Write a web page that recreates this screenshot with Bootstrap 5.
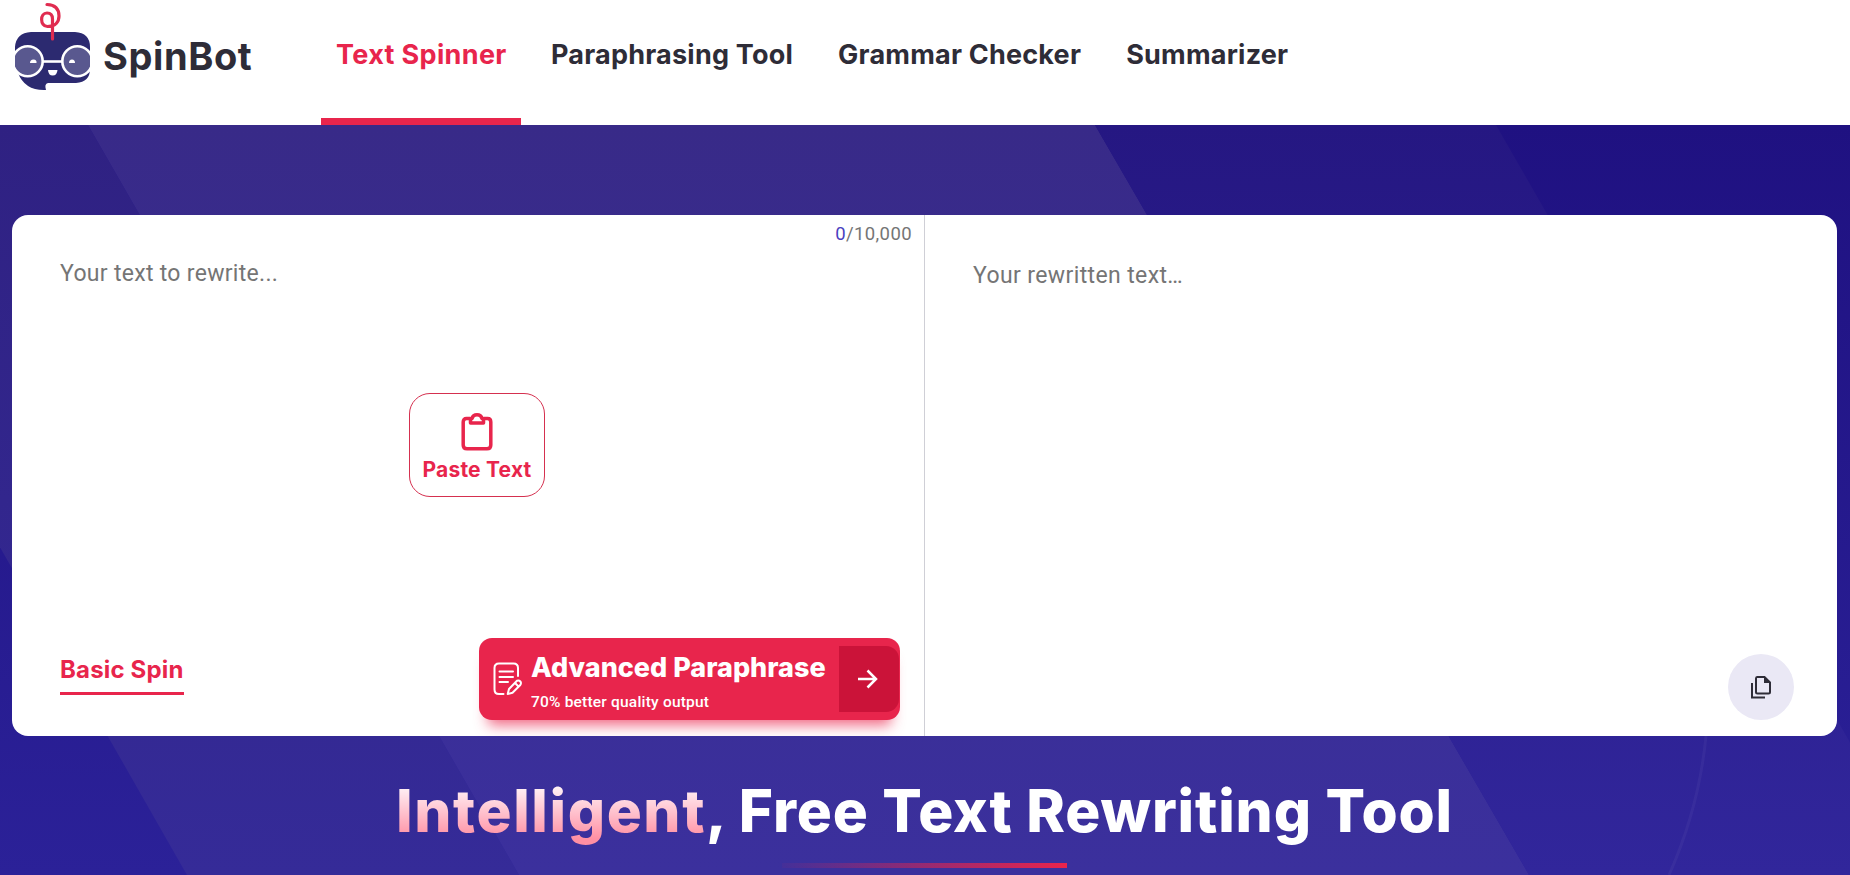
<!DOCTYPE html>
<html lang="en">
<head>
<meta charset="utf-8">
<meta name="viewport" content="width=device-width, initial-scale=1">
<title>SpinBot</title>
<link href="https://cdn.jsdelivr.net/npm/bootstrap@5.3.0/dist/css/bootstrap.min.css" rel="stylesheet">
<style>
  :root { --brand: #e8254c; --ink: #2e2c37; }
  body { font-family: Inter, Roboto, sans-serif; color: var(--ink); height: 875px; overflow: hidden; }
  .site-header { height: 125px; padding-left: 12px; }
  .brand-name { font-size: 38px; font-weight: 700; line-height: 46px; letter-spacing: .6px; margin: 33px 0 0 9px; width: 220px; color: var(--ink); }
  .main-nav { gap: 15px; margin-left: -2px; }
  .main-nav .nav-link { font-size: 27px; font-weight: 700; line-height: 110px; height: 125px; padding: 0 15px; color: var(--ink); letter-spacing: .22px; white-space: nowrap; border-bottom: 7px solid transparent; }
  .main-nav .nav-link.active { color: var(--brand); border-color: var(--brand); letter-spacing: .35px; width: 200px; }
  .hero { height: 750px; padding: 90px 13px 0 12px; background: #221483; }
  .hero-art { left: 0; top: 0; }
  .editor { height: 521px; border-radius: 16px; overflow: hidden; }
  .pane { height: 521px; }
  .pane-in { width: 913px; border-right: 1px solid #cfcfd6; padding: 0 24px 0 48px; }
  .counter { font: 400 18.500px/24px Roboto, sans-serif; letter-spacing: .4px; color: #757575; height: 24px; margin: 7px -12px 0 0; }
  .counter b { font-weight: 400; color: #4a3fc0; }
  .hint { font: 400 23px/30px Roboto, sans-serif; color: #757575; letter-spacing: .3px; }
  .hint-in { margin-top: 13px; }
  .hint-out { margin-top: 46px; letter-spacing: .38px; }
  .paste { width: 136px; height: 104px; border: 1px solid #d5304f; border-radius: 21px; color: var(--brand); font-size: 21px; font-weight: 700; line-height: 26px; letter-spacing: .22px; margin: 104px 0 0 349px; padding: 19px 0 0; background: #fff; white-space: nowrap; }
  .paste span { margin-top: 6px; }
  .basic { color: var(--brand); font-size: 24px; font-weight: 700; line-height: 32px; height: 41px; width: 124px; border-bottom: 3px solid var(--brand); text-decoration: none; white-space: nowrap; margin-top: 16px; letter-spacing: .17px; }
  .advanced { width: 421px; height: 82px; border-radius: 13px; background: var(--brand); color: #fff; padding: 0 1px 0 14px; box-shadow: 0 14px 14px -9px rgba(234,36,75,.7); }
  .advanced .labels { width: 308px; }
  .advanced strong { font-size: 27px; font-weight: 800; line-height: 30px; margin-top: 15px; display: block; white-space: nowrap; }
  .advanced em { font: 500 15.5px/24px Roboto, sans-serif; letter-spacing: .2px; margin-top: 7px; display: block; }
  .go { width: 60px; height: 66px; background: #cb1339; border-radius: 0 13px 13px 0; margin-top: 8px; }
  .copy { width: 66px; height: 66px; background: #eae8f5; right: 43px; bottom: 16px; }
  .headline { font-size: 58.5px; font-weight: 800; line-height: 72px; letter-spacing: .86px; color: #fff; margin-top: 39px; white-space: nowrap; }
  .headline span { letter-spacing: 1.6px; background: linear-gradient(#fff 8%, #ffeaf0 22%, #ff8fa3 90%); -webkit-background-clip: text; background-clip: text; color: transparent; }
  .rule { width: 285px; height: 5px; margin: 16px auto 0; background: linear-gradient(90deg, rgba(234,36,75,.05), #ea244b); }
</style>
</head>
<body>
<header class="site-header bg-white d-flex">
  <a href="#" class="d-flex text-decoration-none">
    <svg width="82" height="95" viewBox="12 0 82 95" fill="none">
      <defs><clipPath id="face"><rect x="15" y="32" width="75" height="59"/></clipPath></defs>
      <path d="M31 32H75Q90 33 90 47V69Q90 82 76 83H48Q44 84 46 90Q25 91 18 73L15 66V47Q16 33 31 32Z" fill="#2c2a70"/>
      <g clip-path="url(#face)" stroke="#fff" stroke-width="2.600">
        <circle cx="27.700" cy="61.300" r="15" fill="#59588f"/>
        <circle cx="77.300" cy="61.300" r="15" fill="#59588f"/>
        <path d="M43 61.500H62"/>
      </g>
      <path d="M30 63Q30 59.500 33.500 59.500T36.500 63ZM69 63Q69 59.500 72 59.500T75 63ZM48 70H57.500Q57 75.500 52.700 75.500T48 70Z" fill="#fff"/>
      <path d="M52.500 39V19Q52.500 13 47 13C40 13 39.500 26 47.500 26.500C56 26.500 59 21 59 16Q59 5 47 4.500" stroke="#e02c50" stroke-width="3.200" stroke-linecap="round"/>
    </svg>
    <span class="brand-name">SpinBot</span>
  </a>
  <nav class="nav main-nav flex-nowrap">
    <a class="nav-link active" href="#">Text Spinner</a>
    <a class="nav-link" href="#">Paraphrasing Tool</a>
    <a class="nav-link" href="#">Grammar Checker</a>
    <a class="nav-link" href="#">Summarizer</a>
  </nav>
</header>
<main class="hero position-relative">
  <svg class="hero-art position-absolute" width="1850" height="750" viewBox="0 125 1850 750">
    <defs>
      <linearGradient id="base" x1="0" y1="0" x2="0" y2="1"><stop offset="0" stop-color="#1f1181"/><stop offset="1" stop-color="#2b2198"/></linearGradient>
      <linearGradient id="left" x1="0" y1="0" x2="0" y2="1"><stop offset="0" stop-color="#2f2182"/><stop offset="1" stop-color="#352b98"/></linearGradient>
      <linearGradient id="mid" x1="0" y1="0" x2="0" y2="1"><stop offset="0" stop-color="#382a88"/><stop offset="1" stop-color="#3b309d"/></linearGradient>
      <linearGradient id="right" x1="0" y1="0" x2="0" y2="1"><stop offset="0" stop-color="#251782"/><stop offset="1" stop-color="#31269b"/></linearGradient>
    </defs>
    <rect y="125" width="1850" height="750" fill="url(#base)"/>
    <path d="M-241 125H88L519 875H187Z" fill="url(#left)"/>
    <path d="M88 125H1095L1529 875H519Z" fill="url(#mid)"/>
    <path d="M1095 125H1496L1926 875H1529Z" fill="url(#right)"/>
    <path d="M1706 736Q1699 808 1669 875" fill="none" stroke="#fff" stroke-opacity=".04" stroke-width="3"/>
  </svg>
  <section class="editor position-relative bg-white d-flex">
    <div class="pane pane-in d-flex flex-column">
      <div class="counter text-end"><b>0</b>/10,000</div>
      <div class="hint hint-in">Your text to rewrite...</div>
      <button class="paste d-flex flex-column align-items-center" type="button">
        <svg width="32" height="38" viewBox="0 0 32 38" fill="none" stroke="currentColor" stroke-width="3.500" stroke-linejoin="round"><path d="M9 5.500H5.500Q2.200 5.500 2.200 9V32Q2.200 35.800 6 35.800H26Q29.800 35.800 29.800 32V9Q29.800 5.500 26.500 5.500H23M9.500 5.500H11Q12 1.800 16 1.800T21 5.500H22.500V10H9.500Z"/></svg>
        <span>Paste Text</span>
      </button>
      <div class="d-flex justify-content-between mt-auto pb-3">
        <a href="#" class="basic">Basic Spin</a>
        <a href="#" class="advanced d-flex text-decoration-none">
          <svg width="29" height="34" viewBox="0 0 29 34" fill="none" stroke="#fff" stroke-width="2" stroke-linecap="round" stroke-linejoin="round" class="mt-4"><path d="M10.500 32H6Q1.500 32 1.500 27.500V6Q1.500 1.500 6 1.500H20.500Q25 1.500 25 6V14M6.500 9.500H20M6.500 15H20M6.500 20H15M16 27L24 18.800Q26 18 27.300 19.500T27.300 23L19.500 30.800L14.700 32ZM22 21L25 24"/></svg>
          <span class="labels ms-auto"><strong>Advanced Paraphrase</strong><em>70% better quality output</em></span>
          <span class="go d-flex align-items-center justify-content-center"><svg class="me-1" width="22" height="20" viewBox="0 0 22 20" fill="none" stroke="#fff" stroke-width="2.500"><path d="M2 10H20M11.500 1.500L20 10L11.500 18.500"/></svg></span>
        </a>
      </div>
    </div>
    <div class="pane flex-fill px-5"><div class="hint hint-out">Your rewritten text…</div></div>
    <button class="copy btn position-absolute rounded-circle p-0 border-0 d-flex align-items-center justify-content-center" type="button" aria-label="Copy"><svg width="20" height="23" viewBox="0 0 20 23" fill="none" stroke="#2e2c37" stroke-width="2"><path d="M6 1H13.500L19 6.500V16Q19 17.500 17.500 17.500H6.500Q5 17.500 5 16V2.500Q5 1 6 1ZM1 7V21.500H14"/><path d="M13 1V7H19Z" fill="#2e2c37" stroke="none"/></svg></button>
  </section>
  <div class="position-relative">
    <h1 class="headline text-center mb-0"><span>Intelligent</span>, Free Text Rewriting Tool</h1>
    <div class="rule"></div>
  </div>
</main>
<script src="https://cdn.jsdelivr.net/npm/bootstrap@5.3.0/dist/js/bootstrap.bundle.min.js"></script>
</body>
</html>
